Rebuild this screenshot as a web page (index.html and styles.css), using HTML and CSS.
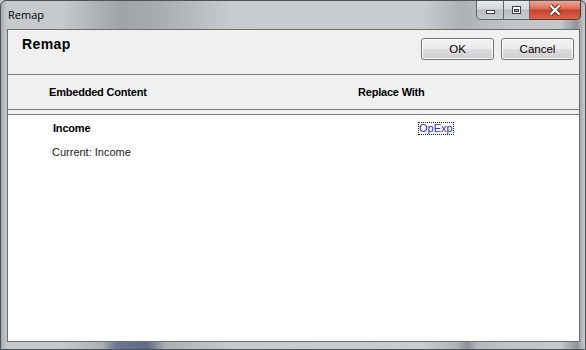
FILE: index.html
```html
<!DOCTYPE html>
<html lang="en">
<head>
  <meta charset="UTF-8">
  <title>Remap</title>
  <link rel="stylesheet" href="styles.css">
</head>
<body>
  <div class="window">
    <div class="titlebar">
      <span class="title">Remap</span>
      <div class="caption">
        <span class="cb min">
          <svg width="11" height="10" viewBox="0 0 11 10"><rect x="1.5" y="5.5" width="8" height="3" fill="#fff" stroke="#3c3f44"/></svg>
        </span>
        <span class="cb max">
          <svg width="11" height="10" viewBox="0 0 11 10"><rect x="1.5" y="1.5" width="8" height="7" fill="#fff" stroke="#3c3f44"/><rect x="3.5" y="4.5" width="4" height="2" fill="#9da2a8" stroke="#3c3f44"/></svg>
        </span>
        <span class="cb close">
          <svg width="14" height="12" viewBox="0 0 14 12"><path d="M2.5 1.5 L11.5 10.5 M11.5 1.5 L2.5 10.5" stroke="#5a2016" stroke-width="4.2"/><path d="M2.5 1.5 L11.5 10.5 M11.5 1.5 L2.5 10.5" stroke="#fff" stroke-width="2.4"/></svg>
        </span>
      </div>
    </div>

    <div class="client">
      <div class="header">
        <h1>Remap</h1>
        <div class="actions">
          <button>OK</button>
          <button>Cancel</button>
        </div>
      </div>

      <div class="columns">
        <div class="col-a">Embedded Content</div>
        <div class="col-b">Replace With</div>
      </div>
      <div class="spacer"></div>

      <div class="list">
        <div class="row">
          <div class="item">
            <div class="name">Income</div>
            <div class="current">Current: Income</div>
          </div>
          <a class="target" href="#">OpExp</a>
        </div>
      </div>
    </div>
    <div class="bottom-edge"></div>
  </div>
</body>
</html>
```

FILE: styles.css
```css
body { margin: 0; font-family: "Liberation Sans", Arial, sans-serif; color: #000; background: #c4c8cc; }

.window { width: 586px; height: 350px; box-sizing: border-box; border: 1px solid #4e5257; border-radius: 6px 6px 0 0;
  padding: 0 5px 0 6px; display: flex; flex-direction: column;
  background: linear-gradient(90deg, #a8acb0 0, #c6cacd 6px, #c6cacd 60px, #9fa3a8 120px, #a9adb2 160px, #c7cbce 230px, #c9cdd0 420px, #adb1b5 460px, #c2c6c9 510px, #c3c7ca 560px, #8f9397 576px, #c9cccf 584px); }

.titlebar { height: 28px; flex: none; display: flex; justify-content: space-between; align-items: flex-start; padding-left: 1px; }
.title { font-family: "Open Sans", sans-serif; font-size: 11px; line-height: 14px; margin-top: 7px; color: #000; }

.caption { display: flex; margin-right: -1px; }
.cb { height: 19px; box-sizing: border-box; display: flex; align-items: center; justify-content: center;
  border: 1px solid #60656b; border-top: none;
  background: linear-gradient(#e6e9ec, #d3d7db 45%, #b9bdc2 50%, #c6cace); }
.min { width: 28px; border-radius: 0 0 0 5px; }
.max { width: 26px; border-left: none; }
.close { width: 51px; border-left: none; border-radius: 0 0 5px 0; border-color: #6b3128;
  background: linear-gradient(#eba897, #d76a52 45%, #c6402a 50%, #d8664b); }

.client { height: 313px; flex: none; box-sizing: border-box; border: 1px solid #6a6d70; background: #fff;
  display: flex; flex-direction: column; }

.header { height: 45px; flex: none; box-sizing: border-box; background: #f0f0f0; border-bottom: 1px solid #828282;
  display: flex; justify-content: space-between; align-items: flex-start; padding: 7px 5px 0 14px; }
.header h1 { margin: 0; font-size: 14px; line-height: 15px; font-weight: bold; letter-spacing: 0.4px; }

.actions { display: flex; gap: 7px; margin-top: 1px; }
.actions button { width: 73px; height: 22px; margin: 0; padding: 0; font-family: "Liberation Sans", Arial, sans-serif;
  font-size: 11.5px; color: #000; border: 1px solid #707070; border-radius: 3px;
  background: linear-gradient(#f2f2f2, #ebebeb 48%, #dddddd 52%, #cfcfcf); box-shadow: inset 0 0 0 1px #fcfcfc; }

.columns { height: 35px; flex: none; box-sizing: border-box; background: #f0f0f0; border-bottom: 1px solid #7c7c7c;
  display: flex; font-size: 11px; font-weight: bold; line-height: 34px; letter-spacing: -0.2px; }
.col-a { width: 350px; box-sizing: border-box; padding-left: 41px; }

.spacer { height: 5px; flex: none; box-sizing: border-box; background: #f0f0f0; border-bottom: 1px solid #7c7c7c; }

.list { flex: 1; background: #fff; }
.row { display: flex; align-items: flex-start; padding-top: 7px; font-size: 11px; line-height: 13px; }
.item { width: 410px; box-sizing: border-box; padding-left: 45px; }
.name { font-weight: bold; letter-spacing: -0.2px; }
.current { margin-top: 11px; margin-left: -1px; color: #1a1a1a; }
.target { display: block; line-height: 11px; border: 1px dotted #222; color: #2e2ec8; text-decoration: none; }

.bottom-edge { height: 7px; flex: none;
  background: linear-gradient(90deg, transparent 95px, #6d7890 110px, #5e6b84 140px, transparent 158px, transparent 450px, #8e949b 460px, transparent 470px); }
```
